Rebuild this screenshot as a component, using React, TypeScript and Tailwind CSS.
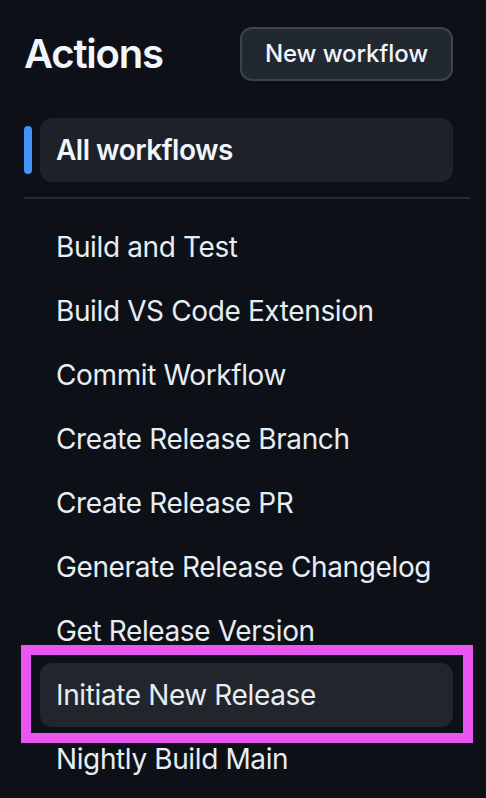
import React from 'react';

const workflows = [
    'Build and Test',
    'Build VS Code Extension',
    'Commit Workflow',
    'Create Release Branch',
    'Create Release PR',
    'Generate Release Changelog',
    'Get Release Version',
    'Initiate New Release',
    'Nightly Build Main',
];

export default function App() {
    return (
        <div className="relative w-[486px] h-[798px] overflow-hidden bg-[#0d1117] text-[#e6edf3] font-['Inter','Liberation_Sans',sans-serif]">
            {/* header */}
            <div className="flex items-center justify-between pl-6 pr-[33px] pt-[27px]">
                <h1 className="text-[40px] leading-[54px] font-semibold tracking-[-1.2px] text-[#f0f6fc]">Actions</h1>
                <button className="h-[54px] w-[213px] rounded-[12px] border-2 border-[#3d444d] bg-[#212830] text-[24px] font-medium tracking-[-0.1px] text-[#f0f6fc]">
                    New workflow
                </button>
            </div>

            {/* all workflows */}
            <div className="mt-[37px] flex items-center gap-2 pl-6">
                <div className="w-2 h-12 rounded-full bg-[#4493f8]" />
                <div className="flex items-center w-[413px] h-16 rounded-[12px] bg-[#1e2228] pl-4 text-[28px] font-semibold tracking-[-0.5px] text-[#f0f6fc]">
                    All workflows
                </div>
            </div>

            <div className="ml-6 mr-4 mt-[15px] h-[2px] bg-[#262b32]" />

            {/* workflow list */}
            <ul className="mt-4">
                {workflows.map(name => (
                    <li
                        key={name}
                        className={`ml-10 flex items-center w-[413px] h-16 rounded-[12px] pl-4 text-[28px] tracking-[-0.38px] ${name === 'Initiate New Release' ? 'bg-[#22262c]' : ''}`}
                    >
                        {name}
                    </li>
                ))}
            </ul>

            {/* highlight */}
            <div className="absolute left-[21px] top-[645px] w-[452px] h-[98px] border-[10px] border-[#ea56ef]" />
        </div>
    );
}
